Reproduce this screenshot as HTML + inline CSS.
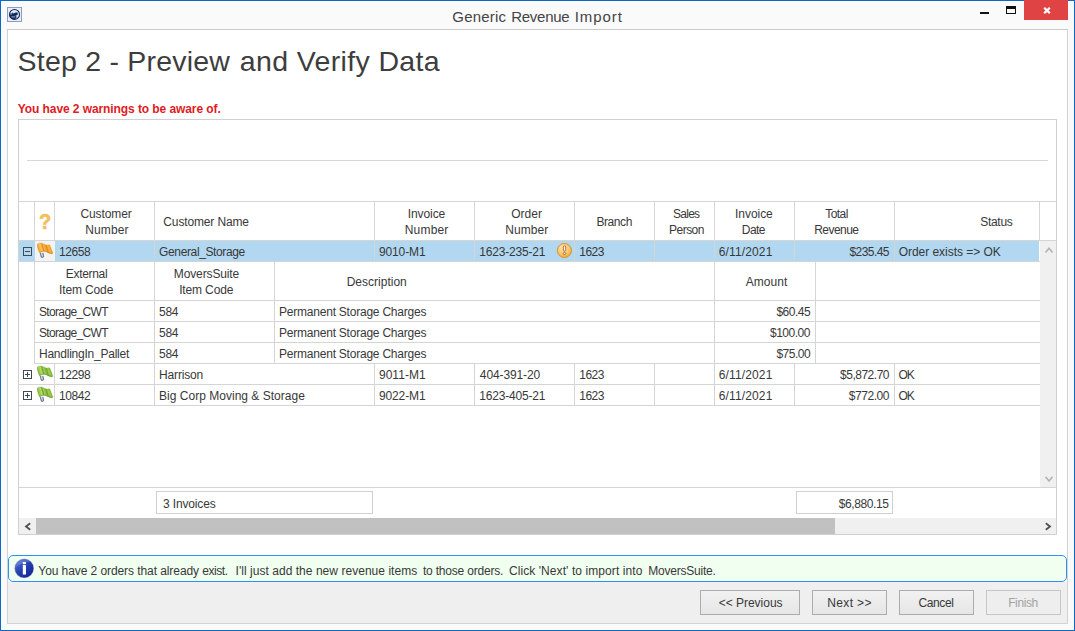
<!DOCTYPE html>
<html lang="en">
<head>
<meta charset="utf-8">
<title>Generic Revenue Import</title>
<style>
html,body{margin:0;padding:0}
body{width:1075px;height:631px;overflow:hidden;background:#fafafa;position:relative;font-family:"Liberation Sans",sans-serif;color:#383838}
#win{position:absolute;left:0;top:0;width:1075px;height:631px;box-sizing:border-box;border:1px solid #0a69c6;background:#fafafa}
.a{position:absolute}
.t{position:absolute;white-space:pre;line-height:1;color:inherit}
.h{position:absolute;height:1px;background:#d5d5d5}
.v{position:absolute;width:1px;background:#d5d5d5}
#panel{left:7px;top:29px;width:1061px;height:595px;box-sizing:border-box;border:1px solid #d3d3d3;border-top-color:#c9c9c9;background:#fff}
#gray{left:8px;top:582px;width:1059px;height:41px;background:#efefef}
#grid{left:18px;top:119px;width:1039px;height:416px;box-sizing:border-box;border:1px solid #d0d0d0;background:#fff}
#sel{left:19px;top:241px;width:1020px;height:20px;background:#b2d7f1}
#flagcell{left:35px;top:241px;width:20px;height:20px;background:#f3f3f3}
#vsb{left:1040px;top:241px;width:16px;height:246px;background:#f0f0f0}
#hsb{left:19px;top:518px;width:1037px;height:16px;background:#f0f0f0}
#thumb{left:36px;top:518px;width:799px;height:16px;background:#c1c1c1}
.box{position:absolute;box-sizing:border-box;border:1px solid #d0d0d0;background:#fff}
.btn{position:absolute;box-sizing:border-box;top:590px;height:25px;border:1px solid #acacac;background:linear-gradient(#f1f1f1,#e6e6e6)}
#info{left:8px;top:555px;width:1059px;height:27px;box-sizing:border-box;border:1px solid #2c91f5;border-radius:5px;background:#f1fff0}
.exp{position:absolute;width:9px;height:9px;box-sizing:border-box;border:1px solid #3f4a55}
.exp i{position:absolute;left:1px;top:3px;width:5px;height:1px;background:#3f4a55}
.exp b{position:absolute;left:3px;top:1px;width:1px;height:5px;background:#3f4a55}
</style>
</head>
<body>
<div id="win"></div>

<!-- title bar -->
<svg class="a" style="left:7px;top:7px" width="15" height="15" viewBox="0 0 15 15">
<rect x="0.5" y="0.5" width="14" height="14" fill="#e8edf6" stroke="#8a9ec0"/>
<circle cx="7.5" cy="7.45" r="5" fill="#e3e9f3" stroke="#10295c" stroke-width="1.1"/>
<path d="M2.5 6.5 L5.3 6.3 L5.7 5.4 L6.6 6.6 L8.6 5.5 L10.7 5.6 L10.6 7.9 L8.4 8.7 L9.8 9.7 L8.6 11.7 Q7 12.6 5 11.9 L3.3 10.6 L2.5 8.6 Z" fill="#10295c"/>
<path d="M3.2 7.1 L4.9 7.1 M4.4 9.8 L8.3 10" stroke="#dfe6f1" stroke-width="0.7" fill="none"/>
</svg>
<div class="a" style="left:980px;top:12px;width:9px;height:2px;background:#111"></div>
<div class="a" style="left:1006px;top:6px;width:10px;height:8px;box-sizing:border-box;border:1px solid #111;border-top-width:3px"></div>
<div class="a" style="left:1024px;top:0px;width:44px;height:20px;background:#e04343"></div>
<svg class="a" style="left:1041.5px;top:6px" width="10" height="9" viewBox="0 0 10 9"><path d="M2.2 1.7 L7.8 7.3 M7.8 1.7 L2.2 7.3" stroke="#fff" stroke-width="2.2" fill="none"/></svg>

<div id="panel" class="a"></div>
<div id="gray" class="a"></div>
<div id="info" class="a"></div>

<!-- grid -->
<div id="grid" class="a"></div>
<div class="h" style="left:27px;top:160px;width:1021px;background:#d8d8d8"></div>
<div class="h" style="left:19px;top:201px;width:1037px"></div>
<div class="h" style="left:19px;top:240px;width:1037px"></div>
<!-- header verticals -->
<div class="v" style="left:34px;top:202px;height:38px"></div>
<div class="v" style="left:54px;top:202px;height:38px"></div>
<div class="v" style="left:154px;top:202px;height:38px"></div>
<div class="v" style="left:374px;top:202px;height:38px"></div>
<div class="v" style="left:474px;top:202px;height:38px"></div>
<div class="v" style="left:574px;top:202px;height:38px"></div>
<div class="v" style="left:654px;top:202px;height:38px"></div>
<div class="v" style="left:714px;top:202px;height:38px"></div>
<div class="v" style="left:794px;top:202px;height:38px"></div>
<div class="v" style="left:894px;top:202px;height:38px"></div>
<div class="v" style="left:1039px;top:202px;height:38px"></div>

<!-- selected row -->
<div id="sel" class="a"></div>
<div id="flagcell" class="a"></div>
<div class="v" style="left:154px;top:241px;height:20px"></div>
<div class="v" style="left:374px;top:241px;height:20px"></div>
<div class="v" style="left:474px;top:241px;height:20px"></div>
<div class="v" style="left:574px;top:241px;height:20px"></div>
<div class="v" style="left:654px;top:241px;height:20px"></div>
<div class="v" style="left:714px;top:241px;height:20px"></div>
<div class="v" style="left:794px;top:241px;height:20px"></div>
<div class="v" style="left:894px;top:241px;height:20px"></div>

<!-- scrollbars -->
<div id="vsb" class="a"></div>
<svg class="a" style="left:1043.9px;top:246.3px" width="10" height="8" viewBox="0 0 10 8"><path d="M1.5 6.6 L5 2.3 L8.5 6.6" stroke="#b3b3b3" stroke-width="1.6" fill="none"/></svg>
<svg class="a" style="left:1043.9px;top:475px" width="10" height="8" viewBox="0 0 10 8"><path d="M1.5 1.8 L5 6.1 L8.5 1.8" stroke="#b3b3b3" stroke-width="1.6" fill="none"/></svg>

<!-- sub table -->
<div class="h" style="left:19px;top:261px;width:1021px"></div>
<div class="h" style="left:34px;top:300px;width:1006px"></div>
<div class="h" style="left:34px;top:321px;width:1006px"></div>
<div class="h" style="left:34px;top:342px;width:1006px"></div>
<div class="h" style="left:34px;top:363px;width:1006px"></div>
<div class="h" style="left:19px;top:384px;width:1021px"></div>
<div class="h" style="left:19px;top:405px;width:1021px"></div>
<div class="v" style="left:34px;top:261px;height:102px"></div>
<div class="v" style="left:154px;top:261px;height:102px"></div>
<div class="v" style="left:274px;top:261px;height:102px"></div>
<div class="v" style="left:714px;top:261px;height:102px"></div>
<div class="v" style="left:815px;top:261px;height:102px"></div>
<!-- rows 2,3 verticals -->
<div class="v" style="left:54px;top:363px;height:42px"></div>
<div class="v" style="left:154px;top:363px;height:42px"></div>
<div class="v" style="left:374px;top:363px;height:42px"></div>
<div class="v" style="left:474px;top:363px;height:42px"></div>
<div class="v" style="left:574px;top:363px;height:42px"></div>
<div class="v" style="left:654px;top:363px;height:42px"></div>
<div class="v" style="left:714px;top:363px;height:42px"></div>
<div class="v" style="left:794px;top:363px;height:42px"></div>
<div class="v" style="left:894px;top:363px;height:42px"></div>

<!-- expand boxes -->
<div class="exp" style="left:23px;top:247px"><i></i></div>
<div class="exp" style="left:23px;top:370px"><i></i><b></b></div>
<div class="exp" style="left:23px;top:391px"><i></i><b></b></div>

<!-- ICONS -->
<svg width="0" height="0" style="position:absolute">
<defs>
<linearGradient id="go" x1="0" y1="0.1" x2="1" y2="-0.1"><stop offset="0" stop-color="#f1a026"/><stop offset="0.1" stop-color="#f8b54a"/><stop offset="0.2" stop-color="#fbc56c"/><stop offset="0.29" stop-color="#e48b16"/><stop offset="0.37" stop-color="#f8b54a"/><stop offset="0.47" stop-color="#f1a026"/><stop offset="0.54" stop-color="#e48b16"/><stop offset="0.62" stop-color="#f8b54a"/><stop offset="0.76" stop-color="#f1a026"/><stop offset="0.9" stop-color="#e48b16"/><stop offset="1" stop-color="#d67808"/></linearGradient>
<linearGradient id="gg" x1="0" y1="0.1" x2="1" y2="-0.1"><stop offset="0" stop-color="#88b938"/><stop offset="0.1" stop-color="#a2cd56"/><stop offset="0.2" stop-color="#b6da70"/><stop offset="0.29" stop-color="#71a42c"/><stop offset="0.37" stop-color="#a2cd56"/><stop offset="0.47" stop-color="#88b938"/><stop offset="0.54" stop-color="#71a42c"/><stop offset="0.62" stop-color="#a2cd56"/><stop offset="0.76" stop-color="#88b938"/><stop offset="0.9" stop-color="#71a42c"/><stop offset="1" stop-color="#5b8f1e"/></linearGradient>
<radialGradient id="gw" cx="0.4" cy="0.3" r="0.8"><stop offset="0" stop-color="#fde9b6"/><stop offset="0.6" stop-color="#f6c566"/><stop offset="1" stop-color="#eda531"/></radialGradient>
<linearGradient id="gi" x1="0.15" y1="0.1" x2="0.8" y2="0.9"><stop offset="0" stop-color="#4d6fd0"/><stop offset="0.5" stop-color="#2440b0"/><stop offset="1" stop-color="#16279a"/></linearGradient>
<g id="flag">
<path d="M3.3 10.8 L4.2 14.7 Q5.3 16.2 6.6 14.4 L5.9 10.8" fill="#d5dbe8" stroke="#6d7b98" stroke-width="1.1"/>
<path d="M0 3 Q0.3 1.9 1 1.5 Q2.3 0.9 3.7 1 Q5 1 6 1.4 Q7 2 8 2.5 Q9.2 3 10.3 3 Q11.2 2.8 12 2.8 L13 3.3 L14.3 7 L15.8 10.8 L15.5 11.7 Q14.2 11.8 13 11.5 Q11.6 11 10.3 10.3 Q9.2 9.6 8 9.2 Q7 9.1 6 9.3 Q4.8 9.6 3.7 10 L2.3 10.7 L1.3 8 L0.3 4.7 Z"/>
</g>
</defs>
</svg>
<span class="t" style="left:38.7px;top:210.8px;font-size:22.5px;transform:scaleX(0.89);transform-origin:0 0;font-weight:bold;color:#f3bf5c;-webkit-text-stroke:0.6px #f3bf5c">?</span>
<svg class="a" style="left:37px;top:242px" width="17" height="17" viewBox="0 0 17 17"><use href="#flag" fill="url(#go)" stroke="#e0922a" stroke-width="0.3"/><path d="M15.5 11.5 Q13 11.4 10.3 10.1 Q8.5 9.1 6 9.2 L2.5 10.5" stroke="#b86205" stroke-width="0.7" fill="none" opacity="0.55"/></svg>
<svg class="a" style="left:37px;top:365px" width="17" height="17" viewBox="0 0 17 17"><use href="#flag" fill="url(#gg)" stroke="#6da32a" stroke-width="0.3"/><path d="M15.5 11.5 Q13 11.4 10.3 10.1 Q8.5 9.1 6 9.2 L2.5 10.5" stroke="#3f7410" stroke-width="0.7" fill="none" opacity="0.55"/></svg>
<svg class="a" style="left:37px;top:386px" width="17" height="17" viewBox="0 0 17 17"><use href="#flag" fill="url(#gg)" stroke="#6da32a" stroke-width="0.3"/><path d="M15.5 11.5 Q13 11.4 10.3 10.1 Q8.5 9.1 6 9.2 L2.5 10.5" stroke="#3f7410" stroke-width="0.7" fill="none" opacity="0.55"/></svg>
<svg class="a" style="left:556px;top:242px" width="17" height="17" viewBox="0 0 17 17"><circle cx="8.4" cy="8.5" r="7" fill="url(#gw)" stroke="#dc8f22" stroke-width="1"/><rect x="7.3" y="3.8" width="2.4" height="5.2" rx="1.2" fill="#fff" stroke="#b9541a" stroke-width="0.9"/><circle cx="8.5" cy="11.5" r="1.2" fill="#fff" stroke="#b9541a" stroke-width="0.9"/></svg>
<svg class="a" style="left:13px;top:557px" width="23" height="23" viewBox="0 0 23 23"><circle cx="11.2" cy="11.4" r="9.9" fill="#c4c4c8"/><circle cx="11.2" cy="11.4" r="9.3" fill="url(#gi)"/><path d="M2.6 10 A9 9 0 0 1 17 4.4 Q9 6 2.6 10Z" fill="#fff" opacity="0.14"/><rect x="9.8" y="4.9" width="3.2" height="2.3" rx="0.6" fill="#fff"/><rect x="9.8" y="8" width="3.2" height="9.6" rx="0.4" fill="#fff"/></svg>


<!-- footer -->
<div class="h" style="left:19px;top:487px;width:1037px"></div>
<div class="box" style="left:156px;top:491px;width:217px;height:23px"></div>
<div class="box" style="left:796px;top:491px;width:97px;height:23px"></div>
<div id="hsb" class="a"></div>
<div id="thumb" class="a"></div>
<svg class="a" style="left:24px;top:522px" width="8" height="9" viewBox="0 0 8 9"><path d="M6.2 1.2 L2 4.5 L6.2 7.8" stroke="#505050" stroke-width="1.8" fill="none"/></svg>
<svg class="a" style="left:1044px;top:522px" width="8" height="9" viewBox="0 0 8 9"><path d="M1.8 1.2 L6 4.5 L1.8 7.8" stroke="#505050" stroke-width="1.8" fill="none"/></svg>


<!-- buttons -->
<div class="btn" style="left:700px;width:100px"></div>
<div class="btn" style="left:812px;width:75px"></div>
<div class="btn" style="left:899px;width:75px"></div>
<div class="btn" style="left:986px;width:75px;border-color:#c6c6c6;background:#eee"></div>

<span class="t" style="left:452.28px;top:9.30px;font-size:15px;letter-spacing:0.194px;color:#444">Generic</span>
<span class="t" style="left:511.13px;top:9.30px;font-size:15px;letter-spacing:-0.244px;color:#444">Revenue</span>
<span class="t" style="left:574.65px;top:9.30px;font-size:15px;letter-spacing:0.942px;color:#444">Import</span>
<span class="t" style="left:17.57px;top:46.87px;font-size:28.5px;letter-spacing:0.218px;color:#3d3d3d">Step 2 - Preview</span>
<span class="t" style="left:239.81px;top:46.87px;font-size:28.5px;letter-spacing:0.360px;color:#3d3d3d">and Verify Data</span>
<span class="t" style="left:17.84px;top:102.84px;font-size:12px;letter-spacing:-0.086px;color:#e01b24;font-weight:bold">You have 2 warnings to be aware of.</span>
<span class="t" style="left:80.42px;top:207.84px;font-size:12px;letter-spacing:-0.095px">Customer</span>
<span class="t" style="left:85.37px;top:223.84px;font-size:12px;letter-spacing:0.076px">Number</span>
<span class="t" style="left:163.32px;top:215.84px;font-size:12px;letter-spacing:-0.138px">Customer Name</span>
<span class="t" style="left:407.74px;top:207.84px;font-size:12px;letter-spacing:-0.081px">Invoice</span>
<span class="t" style="left:404.77px;top:223.84px;font-size:12px;letter-spacing:0.176px">Number</span>
<span class="t" style="left:511.14px;top:207.84px;font-size:12px;letter-spacing:0.054px">Order</span>
<span class="t" style="left:505.27px;top:223.84px;font-size:12px;letter-spacing:0.076px">Number</span>
<span class="t" style="left:596.47px;top:215.84px;font-size:12px;letter-spacing:-0.425px">Branch</span>
<span class="t" style="left:672.97px;top:207.84px;font-size:12px;letter-spacing:-0.727px">Sales</span>
<span class="t" style="left:668.97px;top:223.84px;font-size:12px;letter-spacing:-0.505px">Person</span>
<span class="t" style="left:735.04px;top:207.84px;font-size:12px;letter-spacing:-0.048px">Invoice</span>
<span class="t" style="left:741.87px;top:223.84px;font-size:12px;letter-spacing:-0.601px">Date</span>
<span class="t" style="left:825.23px;top:207.84px;font-size:12px;letter-spacing:-0.562px">Total</span>
<span class="t" style="left:814.17px;top:223.84px;font-size:12px;letter-spacing:-0.535px">Revenue</span>
<span class="t" style="left:980.27px;top:215.84px;font-size:12px;letter-spacing:-0.302px">Status</span>
<span class="t" style="left:59.06px;top:245.84px;font-size:12px;letter-spacing:-0.422px">12658</span>
<span class="t" style="left:159.12px;top:245.84px;font-size:12px;letter-spacing:-0.375px">General_Storage</span>
<span class="t" style="left:378.92px;top:245.84px;font-size:12px;letter-spacing:-0.114px">9010-M1</span>
<span class="t" style="left:479.36px;top:245.84px;font-size:12px;letter-spacing:-0.198px">1623-235-21</span>
<span class="t" style="left:579.36px;top:245.84px;font-size:12px;letter-spacing:-0.542px">1623</span>
<span class="t" style="left:718.72px;top:245.84px;font-size:12px;letter-spacing:0.140px">6/11/2021</span>
<span class="t" style="left:849.52px;top:245.84px;font-size:12px;letter-spacing:-0.576px">$235.45</span>
<span class="t" style="left:898.64px;top:245.84px;font-size:12px;letter-spacing:-0.032px">Order exists =&gt; OK</span>
<span class="t" style="left:65.77px;top:267.84px;font-size:12px;letter-spacing:-0.320px">External</span>
<span class="t" style="left:59.04px;top:283.84px;font-size:12px;letter-spacing:-0.135px">Item Code</span>
<span class="t" style="left:173.87px;top:267.84px;font-size:12px;letter-spacing:-0.135px">MoversSuite</span>
<span class="t" style="left:179.14px;top:283.84px;font-size:12px;letter-spacing:-0.135px">Item Code</span>
<span class="t" style="left:346.67px;top:275.84px;font-size:12px;letter-spacing:0.007px">Description</span>
<span class="t" style="left:745.82px;top:275.84px;font-size:12px;letter-spacing:0.019px">Amount</span>
<span class="t" style="left:38.97px;top:305.84px;font-size:12px;letter-spacing:-0.651px">Storage_CWT</span>
<span class="t" style="left:159.12px;top:305.84px;font-size:12px;letter-spacing:-0.347px">584</span>
<span class="t" style="left:279.07px;top:305.84px;font-size:12px;letter-spacing:-0.225px">Permanent Storage Charges</span>
<span class="t" style="left:776.42px;top:305.84px;font-size:12px;letter-spacing:-0.480px">$60.45</span>
<span class="t" style="left:38.97px;top:326.84px;font-size:12px;letter-spacing:-0.651px">Storage_CWT</span>
<span class="t" style="left:159.12px;top:326.84px;font-size:12px;letter-spacing:-0.347px">584</span>
<span class="t" style="left:279.07px;top:326.84px;font-size:12px;letter-spacing:-0.225px">Permanent Storage Charges</span>
<span class="t" style="left:770.02px;top:326.84px;font-size:12px;letter-spacing:-0.495px">$100.00</span>
<span class="t" style="left:38.97px;top:347.84px;font-size:12px;letter-spacing:-0.233px">HandlingIn_Pallet</span>
<span class="t" style="left:159.12px;top:347.84px;font-size:12px;letter-spacing:-0.347px">584</span>
<span class="t" style="left:279.07px;top:347.84px;font-size:12px;letter-spacing:-0.225px">Permanent Storage Charges</span>
<span class="t" style="left:776.42px;top:347.84px;font-size:12px;letter-spacing:-0.485px">$75.00</span>
<span class="t" style="left:59.06px;top:368.84px;font-size:12px;letter-spacing:-0.422px">12298</span>
<span class="t" style="left:159.07px;top:368.84px;font-size:12px;letter-spacing:-0.170px">Harrison</span>
<span class="t" style="left:378.92px;top:368.84px;font-size:12px;letter-spacing:0.053px">9011-M1</span>
<span class="t" style="left:479.82px;top:368.84px;font-size:12px;letter-spacing:-0.108px">404-391-20</span>
<span class="t" style="left:579.36px;top:368.84px;font-size:12px;letter-spacing:-0.542px">1623</span>
<span class="t" style="left:718.72px;top:368.84px;font-size:12px;letter-spacing:0.140px">6/11/2021</span>
<span class="t" style="left:840.02px;top:368.84px;font-size:12px;letter-spacing:-0.484px">$5,872.70</span>
<span class="t" style="left:898.44px;top:368.84px;font-size:12px;letter-spacing:-1.068px">OK</span>
<span class="t" style="left:59.06px;top:389.84px;font-size:12px;letter-spacing:-0.421px">10842</span>
<span class="t" style="left:159.07px;top:389.84px;font-size:12px;letter-spacing:0.017px">Big Corp Moving &amp; Storage</span>
<span class="t" style="left:378.92px;top:389.84px;font-size:12px;letter-spacing:-0.114px">9022-M1</span>
<span class="t" style="left:479.36px;top:389.84px;font-size:12px;letter-spacing:-0.198px">1623-405-21</span>
<span class="t" style="left:579.36px;top:389.84px;font-size:12px;letter-spacing:-0.542px">1623</span>
<span class="t" style="left:718.72px;top:389.84px;font-size:12px;letter-spacing:0.140px">6/11/2021</span>
<span class="t" style="left:848.72px;top:389.84px;font-size:12px;letter-spacing:-0.428px">$772.00</span>
<span class="t" style="left:898.44px;top:389.84px;font-size:12px;letter-spacing:-1.068px">OK</span>
<span class="t" style="left:163.03px;top:497.84px;font-size:12px;letter-spacing:-0.153px">3 Invoices</span>
<span class="t" style="left:838.72px;top:497.84px;font-size:12px;letter-spacing:-0.407px">$6,880.15</span>
<span class="t" style="left:38.33px;top:564.84px;font-size:12px;letter-spacing:-0.078px">You have 2 orders that already</span>
<span class="t" style="left:202.26px;top:564.84px;font-size:12px;letter-spacing:-0.431px">exist.</span>
<span class="t" style="left:235.54px;top:564.84px;font-size:12px;letter-spacing:0.038px">I'll just add the new revenue items</span>
<span class="t" style="left:422.91px;top:564.84px;font-size:12px;letter-spacing:-0.196px">to those orders.</span>
<span class="t" style="left:508.92px;top:564.84px;font-size:12px;letter-spacing:0.083px">Click 'Next' to import into</span>
<span class="t" style="left:648.17px;top:564.84px;font-size:12px;letter-spacing:-0.206px">MoversSuite.</span>
<span class="t" style="left:718.65px;top:596.84px;font-size:12px;letter-spacing:-0.009px">&lt;&lt; Previous</span>
<span class="t" style="left:827.27px;top:596.84px;font-size:12px;letter-spacing:0.353px">Next &gt;&gt;</span>
<span class="t" style="left:918.52px;top:596.84px;font-size:12px;letter-spacing:-0.388px">Cancel</span>
<span class="t" style="left:1008.17px;top:596.84px;font-size:12px;letter-spacing:-0.385px;color:#a3a3a3">Finish</span>
</body>
</html>
